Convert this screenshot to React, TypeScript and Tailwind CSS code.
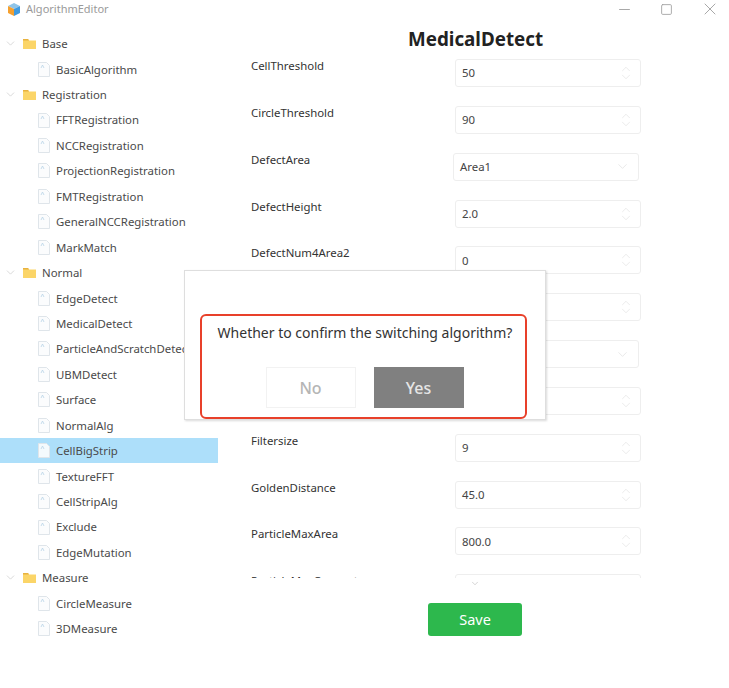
import { ChevronDown, ChevronUp, Minus, Square, X } from "lucide-react";

const tree = [
  { name: "Base", items: ["BasicAlgorithm"] },
  {
    name: "Registration",
    items: ["FFTRegistration", "NCCRegistration", "ProjectionRegistration", "FMTRegistration", "GeneralNCCRegistration", "MarkMatch"],
  },
  {
    name: "Normal",
    items: ["EdgeDetect", "MedicalDetect", "ParticleAndScratchDetect", "UBMDetect", "Surface", "NormalAlg", "CellBigStrip", "TextureFFT", "CellStripAlg", "Exclude", "EdgeMutation"],
  },
  { name: "Measure", items: ["CircleMeasure", "3DMeasure"] },
];

// the three rows behind the dialog can't be read in the picture, so they have no label
const fields = [
  { id: 1, label: "CellThreshold", value: "50" },
  { id: 2, label: "CircleThreshold", value: "90" },
  { id: 3, label: "DefectArea", value: "Area1", select: true },
  { id: 4, label: "DefectHeight", value: "2.0" },
  { id: 5, label: "DefectNum4Area2", value: "0" },
  { id: 6, label: "", value: "" },
  { id: 7, label: "", value: "", select: true },
  { id: 8, label: "", value: "" },
  { id: 9, label: "Filtersize", value: "9" },
  { id: 10, label: "GoldenDistance", value: "45.0" },
  { id: 11, label: "ParticleMaxArea", value: "800.0" },
  { id: 12, label: "ParticleMaxConnect", value: "" },
];

function FolderIcon() {
  return (
    <svg width="13" height="11" viewBox="0 0 13 11" className="shrink-0">
      <path d="M0 1h5l1 1.5h7V11H0z" fill="#fbd568" />
      <path d="M0 1h5l1 1.5H0z" fill="#e8b23f" />
    </svg>
  );
}

function FileIcon({ active }: { active?: boolean }) {
  return (
    <svg width="12" height="15" viewBox="0 0 12 15" className="shrink-0">
      <path d="M.5.5h8l3 3v11H.5z" fill={active ? "#f4fafd" : "#fbfcfd"} stroke="#dfe5ea" />
      <path d="M3 6l1.5-3L6 6" fill="none" stroke="#b8d3e6" strokeWidth="0.8" />
    </svg>
  );
}

function TreeView() {
  return (
    <div className="w-[218px] shrink-0 overflow-hidden pt-[13px]">
      {tree.map((group) => (
        <div key={group.name}>
          <div className="flex h-[25.45px] items-center text-[11.4px] text-[#4a4a4a]">
            <ChevronDown size={13} strokeWidth={1.5} className="ml-[4px] mr-[6px] shrink-0 text-[#d0d0d0]" />
            <FolderIcon />
            <span className="ml-[6px] -translate-y-[0.5px]">{group.name}</span>
          </div>
          {group.items.map((item) => (
            <div
              key={item}
              className={`flex h-[25.45px] items-center whitespace-nowrap pl-[38px] text-[11.4px] text-[#4a4a4a] ${item === "CellBigStrip" ? "bg-[#addffa]" : ""}`}
            >
              <FileIcon active={item === "CellBigStrip"} />
              <span className="ml-[6px] -translate-y-[0.5px]">{item}</span>
            </div>
          ))}
        </div>
      ))}
    </div>
  );
}

function Field({ label, value, select }: { label: string; value: string; select?: boolean }) {
  return (
    <div className="flex h-[46.85px] shrink-0 items-start justify-between">
      <span className="text-[11.4px] leading-[13px] text-[#333]">{label}</span>
      <div
        className={`flex h-[28px] w-[186px] items-center justify-between rounded-[3px] border border-[#eeeeee] bg-white text-[11.4px] text-[#444] ${select ? "mr-[2px] pl-[6px] pr-[8px]" : "pl-[6px] pr-[7px]"}`}
      >
        <span>{value}</span>
        {select ? (
          <ChevronDown size={15} strokeWidth={1} className="text-[#dcdcdc]" />
        ) : (
          <div className="flex flex-col text-[#e2e2e2]">
            <ChevronUp size={14} strokeWidth={1.2} className="-mb-[6px]" />
            <ChevronDown size={14} strokeWidth={1.2} />
          </div>
        )}
      </div>
    </div>
  );
}

function ConfirmDialog() {
  return (
    <div className="absolute left-[184px] top-[270px] z-10 h-[150px] w-[362px] border border-[#dedede] bg-white pl-[15px] pt-[43px] shadow-[1px_1px_2px_rgba(0,0,0,0.15)]">
      <div className="flex h-[105px] w-[327px] flex-col items-center rounded-[6px] border-2 border-[#e8402a]">
        <p className="ml-[3px] mt-[7px] text-[14px] leading-[20px] text-[#333]">Whether to confirm the switching algorithm?</p>
        <div className="ml-[2px] mt-[24px] flex gap-[18px]">
          <button className="h-[41px] w-[90px] border border-[#f2f2f2] bg-white text-[16px] font-medium text-[#b5b5b5]">No</button>
          <button className="h-[41px] w-[90px] bg-[#808080] text-[16px] font-medium text-[#e6e6e6]">Yes</button>
        </div>
      </div>
    </div>
  );
}

export default function App() {
  return (
    <div className="relative h-[688px] w-[729px] overflow-hidden bg-white font-['Noto_Sans',sans-serif]">
      <div className="flex h-[18px] items-center pl-[8px] pr-[9px]">
        <svg width="12" height="13" viewBox="0 0 12 13">
          <path d="M6 0l6 3-6 3-6-3z" fill="#8fc4e8" />
          <path d="M0 3l6 3v7l-6-3z" fill="#f5a02f" />
          <path d="M12 3L6 6v7l6-3z" fill="#3f9ae0" />
        </svg>
        <span className="ml-[6px] text-[11px] text-[#9a9a9a]">AlgorithmEditor</span>
        <div className="ml-auto flex items-center gap-[27px] text-[#a0a0a0]">
          <Minus size={17} strokeWidth={1.3} />
          <Square size={13} strokeWidth={1.6} />
          <X size={20} strokeWidth={1.1} />
        </div>
      </div>
      <div className="flex h-[670px]">
        <TreeView />
        <div className="flex flex-1 flex-col pl-[33px]">
          <h1 className="ml-[157px] mt-[9px] h-[32px] text-[18.8px] font-bold leading-[24px] text-[#222]">MedicalDetect</h1>
          <div className="flex h-[519px] w-[390px] flex-col overflow-hidden">
            {fields.map((field) => (
              <Field key={field.id} label={field.label} value={field.value} select={field.select} />
            ))}
          </div>
          <div className="ml-[219px] flex w-[10px] justify-center text-[#999]">
            <ChevronDown size={11} strokeWidth={1} />
          </div>
          <button className="ml-[177px] mt-[14px] h-[33px] w-[94px] rounded-[3px] bg-[#2db84d] text-[14.5px] text-white">Save</button>
        </div>
      </div>
      <ConfirmDialog />
    </div>
  );
}
